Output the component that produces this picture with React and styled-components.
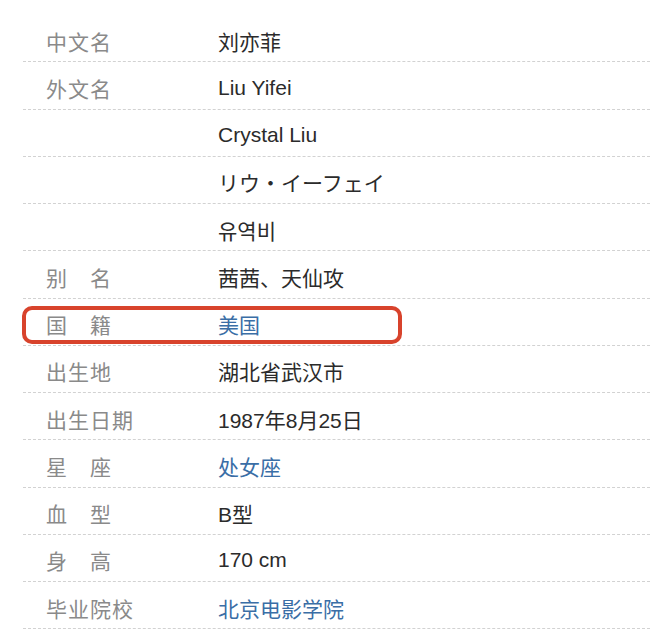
import React from "react";
import styled, { createGlobalStyle } from "styled-components";

const GlobalStyle = createGlobalStyle`
  body {
    margin: 0;
    background: #ffffff;
    font-family: "Liberation Sans", "Noto Sans CJK SC", sans-serif;
  }
`;

const rows = [
  { label: "中文名", value: "刘亦菲" },
  { label: "外文名", value: "Liu Yifei" },
  { label: "", value: "Crystal Liu" },
  { label: "", value: "リウ・イーフェイ", lang: "ja" },
  { label: "", value: "유역비", lang: "ko" },
  { label: "别　名", value: "茜茜、天仙攻" },
  { label: "国　籍", value: "美国", link: true, marked: true },
  { label: "出生地", value: "湖北省武汉市" },
  { label: "出生日期", value: "1987年8月25日" },
  { label: "星　座", value: "处女座", link: true },
  { label: "血　型", value: "B型" },
  { label: "身　高", value: "170 cm" },
  { label: "毕业院校", value: "北京电影学院", link: true },
];

const fontFor = {
  ja: `"Liberation Sans", "Noto Sans CJK JP", sans-serif`,
  ko: `"Liberation Sans", "Noto Sans CJK KR", sans-serif`,
};

const InfoList = () => {
  return (
    <>
      <GlobalStyle />
      <Sheet>
        {rows.map((row, i) => (
          <Row key={i}>
            <Label>{row.label}</Label>
            <Value $link={row.link} $font={fontFor[row.lang]}>
              {row.value}
            </Value>
            {row.marked && <Mark />}
          </Row>
        ))}
      </Sheet>
    </>
  );
};

export default InfoList;

const Sheet = styled.div`
  padding: 15px 0 0 23px;
`;

const Row = styled.div`
  position: relative;
  display: flex;
  align-items: center;
  height: 47.25px;
  box-sizing: border-box;
  padding-top: 5px;
  border-bottom: 1px dashed #d2d2d2;
`;

const Label = styled.div`
  width: 195px;
  padding-left: 23px;
  box-sizing: border-box;
  font-family: "Liberation Sans", "Noto Sans CJK SC", sans-serif;
  font-size: 21px;
  letter-spacing: 1px;
  color: #8a8a8a;
  white-space: pre;
`;

const Value = styled.div`
  font-family: ${(p) => p.$font || `"Liberation Sans", "Noto Sans CJK SC", sans-serif`};
  font-size: 21px;
  color: ${(p) => (p.$link ? "#3a6ea6" : "#2b2b2b")};
`;

const Mark = styled.div`
  position: absolute;
  left: -1px;
  top: 7px;
  width: 380px;
  height: 38px;
  box-sizing: border-box;
  border: 4px solid #d8432c;
  border-radius: 10px;
  pointer-events: none;
`;
